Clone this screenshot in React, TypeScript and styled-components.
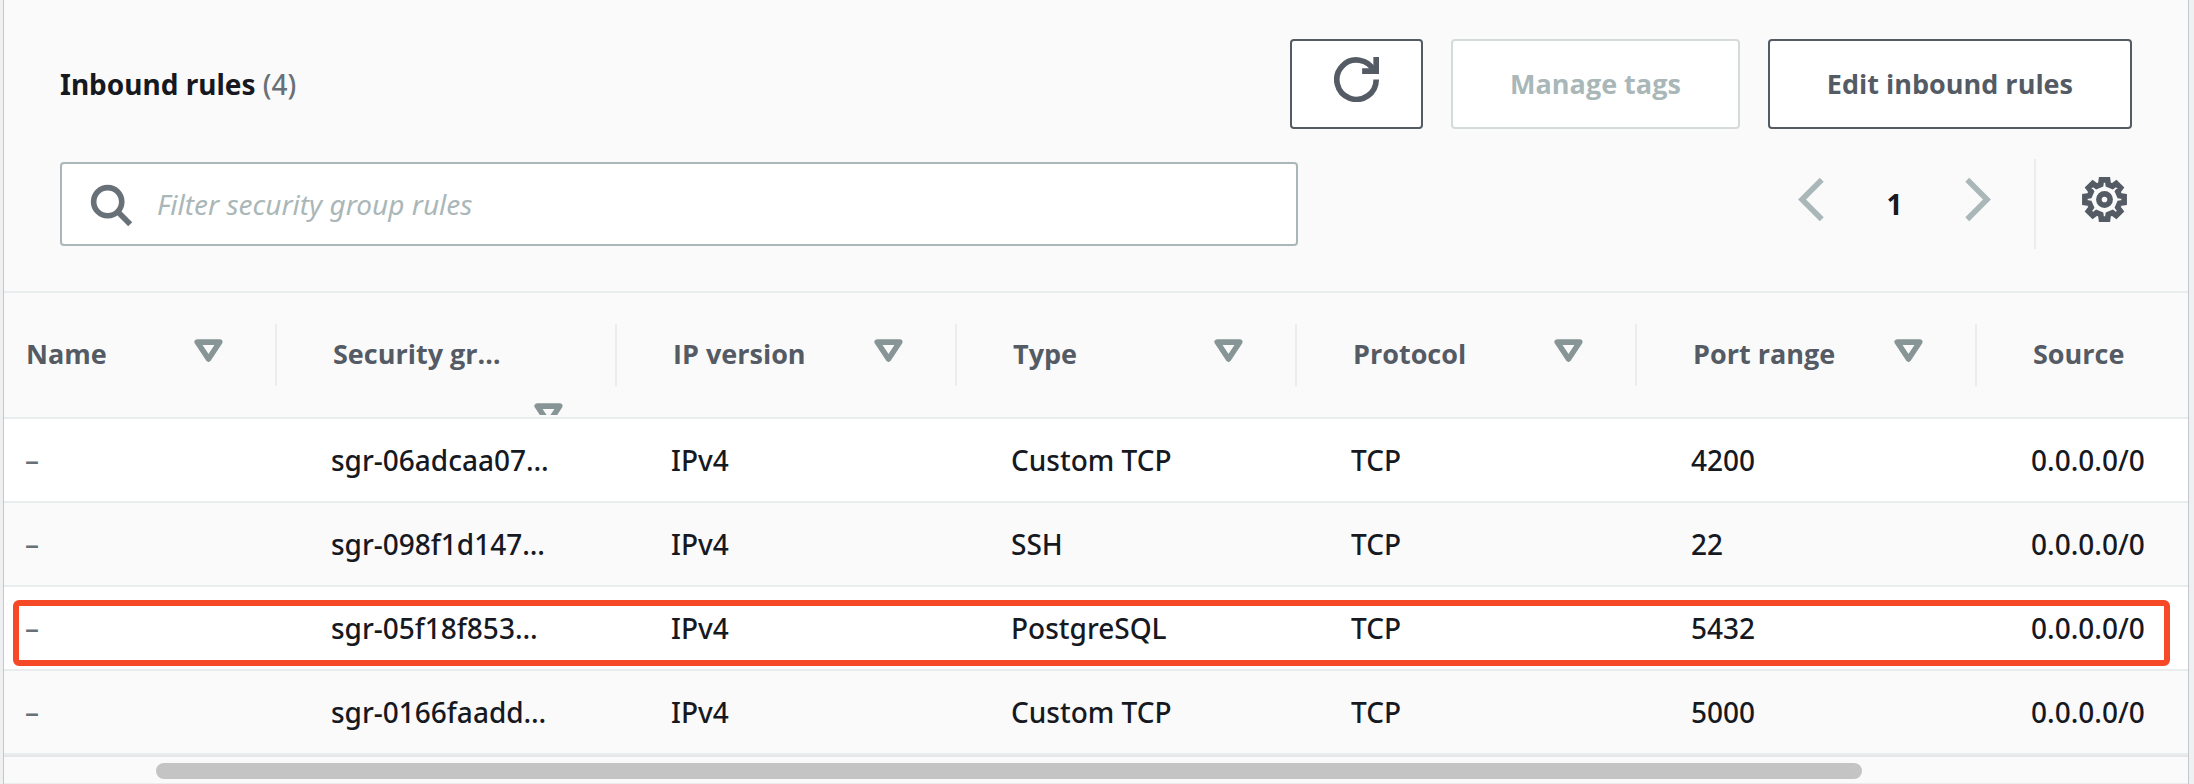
import React from "react";
import styled, { createGlobalStyle } from "styled-components";

const color = {
  page: "#eff0f1",
  panel: "#fafafa",
  edge: "#c3c7ca",
  line: "#eaeded",
  text: "#16191f",
  strong: "#545b64",
  muted: "#687078",
  disabled: "#aab7b8",
  disabledLine: "#d5dbdb",
  caret: "#879596",
  thumb: "#c4c4c4",
  highlight: "#f54927",
};

const labelFont = `700 27px/52px "Open Sans", "Noto Sans", sans-serif`;

const GlobalStyle = createGlobalStyle`
  *, *::before, *::after { box-sizing: border-box; }
  body {
    margin: 0;
    background: ${color.page};
    color: ${color.text};
    font-family: "Noto Sans", "Open Sans", sans-serif;
    font-size: 28px;
    font-weight: 500;
    line-height: 40px;
  }
  button, input { font: inherit; color: inherit; }
`;

const Page = styled.main`
  padding: 0 5px 0 3px;
`;

const Panel = styled.section`
  background: ${color.panel};
  border: 1px solid ${color.edge};
  border-width: 0 1px;
`;

const PanelHeader = styled.header`
  padding: 39px 56px 42px;
  border-bottom: 2px solid ${color.line};
`;

const TitleRow = styled.div`
  display: flex;
  align-items: center;
  justify-content: space-between;
  gap: 28px;
`;

const Title = styled.h2`
  margin: 0;
  font-size: 28px;
  font-weight: 700;
`;

const Counter = styled.span`
  color: ${color.muted};
  font-weight: 500;
`;

const Actions = styled.div`
  display: flex;
  gap: 28px;
`;

const Button = styled.button`
  height: 90px;
  padding: 0 57px;
  background: #fff;
  border: 2px solid ${color.strong};
  border-radius: 4px;
  color: ${color.strong};
  font: ${labelFont};
  white-space: nowrap;

  &:disabled {
    border-color: ${color.disabledLine};
    color: ${color.disabled};
  }
`;

const RefreshButton = styled(Button)`
  display: flex;
  align-items: flex-start;
  padding: 16px 42px;
`;

const ToolRow = styled.div`
  display: flex;
  align-items: center;
  justify-content: space-between;
  gap: 28px;
  margin-top: 30px;
`;

const SearchBox = styled.label`
  display: flex;
  align-items: center;
  flex: 0 1 1238px;
  gap: 24px;
  height: 84px;
  padding: 0 26px;
  background: #fff;
  border: 2px solid ${color.disabled};
  border-radius: 4px;
  color: ${color.muted};
`;

const SearchInput = styled.input`
  flex: 1;
  min-width: 0;
  padding: 0;
  background: none;
  border: 0;
  outline: 0;
  color: ${color.text};

  &::placeholder {
    color: ${color.disabled};
    font-style: italic;
    font-weight: 400;
    opacity: 1;
  }
`;

const Tools = styled.div`
  display: flex;
  align-items: center;
  height: 90px;
`;

const IconButton = styled.button`
  display: flex;
  align-items: flex-start;
  height: 54px;
  padding: 0;
  background: none;
  border: 0;
  color: ${color.strong};

  &:disabled {
    color: ${color.disabled};
  }
`;

const Pagination = styled.nav`
  display: flex;
  align-items: center;
  padding-right: 33px;
`;

const PageNumber = styled.button`
  width: 123px;
  padding: 0;
  background: none;
  border: 0;
  font-weight: 700;
`;

const Preferences = styled.div`
  display: flex;
  align-items: center;
  height: 90px;
  padding: 0 5px 0 46px;
  border-left: 2px solid ${color.line};
`;

const Table = styled.table`
  width: 100%;
  table-layout: fixed;
  border-collapse: separate;
  border-spacing: 0;
`;

const Col = styled.col<{ $width?: number }>`
  width: ${(p) => (p.$width ? `${p.$width}px` : "auto")};
`;

const HeadCell = styled.th`
  height: 126px;
  padding: 0;
  border-bottom: 2px solid ${color.line};
  color: ${color.strong};
  font: ${labelFont};
  text-align: left;
  vertical-align: top;
`;

const HeadContent = styled.div<{ $divided: boolean; $first: boolean }>`
  display: flex;
  flex-wrap: wrap;
  align-items: flex-start;
  align-content: flex-start;
  row-gap: 12px;
  height: 122px;
  padding: 35px 46px 0 ${(p) => (p.$first ? 22 : 56)}px;
  overflow: hidden;
  background: linear-gradient(${color.line}, ${color.line}) no-repeat right 31px / ${(p) => (p.$divided ? 2 : 0)}px 62px;
  white-space: nowrap;
`;

const HeadLabel = styled.span<{ $fill: boolean }>`
  flex: ${(p) => (p.$fill ? "0 0 100%" : "0 0 auto")};
`;

const SortButton = styled.button`
  display: flex;
  margin-left: auto;
  padding: 0;
  background: none;
  border: 0;
  color: ${color.caret};
`;

const Row = styled.tr`
  position: relative;
  background: #fff;

  &:nth-child(even) {
    background: ${color.panel};
  }
`;

const Cell = styled.td`
  height: 84px;
  padding: 0 0 0 54px;
  border-bottom: 2px solid ${color.line};
  white-space: nowrap;

  &:first-child {
    padding-left: 21px;
    color: ${color.muted};
  }
`;

const Highlight = styled.span`
  position: absolute;
  inset: 13px 18px 5px 9px;
  border: 6px solid ${color.highlight};
  border-radius: 6px;
  pointer-events: none;
`;

const ScrollTrack = styled.div`
  display: grid;
  grid-template-columns: 152fr 1706fr 326fr;
  padding: 6px 0 4px;
  border-top: 2px solid #e4e6e7;
  border-bottom: 1px solid ${color.line};
`;

const ScrollThumb = styled.div`
  grid-column: 2;
  height: 16px;
  background: ${color.thumb};
  border-radius: 8px;
`;

const Svg = styled.svg`
  display: block;
  flex: none;
  width: 45px;
  height: 45px;
  fill: none;
  stroke: currentColor;
  stroke-width: 2;
`;

const Icon = ({ children }: { children: React.ReactNode }) => (
  <Svg viewBox="0 0 16 16" aria-hidden="true">
    {children}
  </Svg>
);

/* Outline of an eight-toothed cog centred in the 16-unit icon box. */
const cogPoints = Array.from({ length: 8 }, (_, tooth) =>
  [
    [-9, 7.07],
    [9, 7.07],
    [14, 5.5],
    [31, 5.5],
  ].map(([offset, radius]) => {
    const angle = ((tooth * 45 + offset) * Math.PI) / 180;
    return `${(8 + radius * Math.sin(angle)).toFixed(2)},${(8 - radius * Math.cos(angle)).toFixed(2)}`;
  })
)
  .flat()
  .join(" ");

type Column = { name: string; width?: number; wraps?: boolean; sortable: boolean };

const columns: Column[] = [
  { name: "Name", width: 273, sortable: true },
  { name: "Security gr…", width: 340, wraps: true, sortable: true },
  { name: "IP version", width: 340, sortable: true },
  { name: "Type", width: 340, sortable: true },
  { name: "Protocol", width: 340, sortable: true },
  { name: "Port range", width: 340, sortable: true },
  { name: "Source", sortable: false },
];

const rules = [
  { cells: ["–", "sgr-06adcaa07…", "IPv4", "Custom TCP", "TCP", "4200", "0.0.0.0/0"] },
  { cells: ["–", "sgr-098f1d147…", "IPv4", "SSH", "TCP", "22", "0.0.0.0/0"] },
  { cells: ["–", "sgr-05f18f853…", "IPv4", "PostgreSQL", "TCP", "5432", "0.0.0.0/0"], marked: true },
  { cells: ["–", "sgr-0166faadd…", "IPv4", "Custom TCP", "TCP", "5000", "0.0.0.0/0"] },
];

export default function App() {
  return (
    <Page>
      <GlobalStyle />
      <Panel>
        <PanelHeader>
          <TitleRow>
            <Title>
              Inbound rules <Counter>({rules.length})</Counter>
            </Title>
            <Actions>
              <RefreshButton type="button" aria-label="Refresh">
                <Icon>
                  <path d="M10 5h5V0" />
                  <path d="M15 8a7 7 0 1 1-.7-3" />
                </Icon>
              </RefreshButton>
              <Button type="button" disabled>
                Manage tags
              </Button>
              <Button type="button">Edit inbound rules</Button>
            </Actions>
          </TitleRow>
          <ToolRow>
            <SearchBox>
              <Icon>
                <circle cx="7" cy="7" r="5" />
                <path d="M15 15l-4.5-4.5" />
              </Icon>
              <SearchInput
                type="text"
                aria-label="Filter security group rules"
                placeholder="Filter security group rules"
              />
            </SearchBox>
            <Tools>
              <Pagination aria-label="Pages">
                <IconButton type="button" disabled aria-label="Previous page">
                  <Icon>
                    <path d="M12 1L5 8l7 7" />
                  </Icon>
                </IconButton>
                <PageNumber type="button" aria-current="page">
                  1
                </PageNumber>
                <IconButton type="button" disabled aria-label="Next page">
                  <Icon>
                    <path d="M4 1l7 7-7 7" />
                  </Icon>
                </IconButton>
              </Pagination>
              <Preferences>
                <IconButton type="button" aria-label="Preferences">
                  <Icon>
                    <polygon points={cogPoints} />
                    <circle cx="8" cy="8" r="2" />
                  </Icon>
                </IconButton>
              </Preferences>
            </Tools>
          </ToolRow>
        </PanelHeader>
        <Table>
          <colgroup>
            {columns.map((c) => (
              <Col key={c.name} $width={c.width} />
            ))}
          </colgroup>
          <thead>
            <tr>
              {columns.map((c, i) => (
                <HeadCell key={c.name} scope="col">
                  <HeadContent $first={i === 0} $divided={i < columns.length - 1}>
                    <HeadLabel $fill={!!c.wraps}>{c.name}</HeadLabel>
                    {c.sortable && (
                      <SortButton type="button" aria-label={`Sort by ${c.name}`}>
                        <Icon>
                          <path d="M4 5h8l-4 6-4-6z" strokeLinejoin="round" />
                        </Icon>
                      </SortButton>
                    )}
                  </HeadContent>
                </HeadCell>
              ))}
            </tr>
          </thead>
          <tbody>
            {rules.map((rule) => (
              <Row key={rule.cells[1]}>
                {rule.cells.map((value, i) => (
                  <Cell key={columns[i].name}>
                    {value}
                    {rule.marked && i === 0 && <Highlight aria-hidden="true" />}
                  </Cell>
                ))}
              </Row>
            ))}
          </tbody>
        </Table>
        <ScrollTrack>
          <ScrollThumb />
        </ScrollTrack>
      </Panel>
    </Page>
  );
}
